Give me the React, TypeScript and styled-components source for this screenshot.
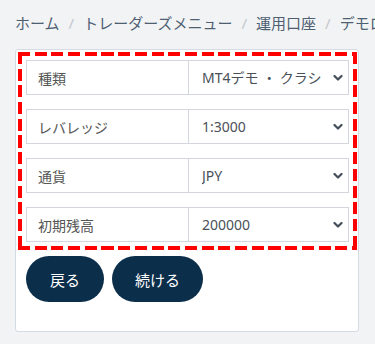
import styled, { createGlobalStyle } from 'styled-components'

const GlobalStyle = createGlobalStyle`
  html, body {
    margin: 0;
    padding: 0;
    background: #f2f3f5;
    font-family: "Noto Sans", "Noto Sans CJK JP", sans-serif;
  }
`

const crumbs = ['ホーム', 'トレーダーズメニュー', '運用口座', 'デモロ座の開設']

const fields = [
  { label: '種類', value: 'MT4デモ ・ クラシック口座' },
  { label: 'レバレッジ', value: '1:3000' },
  { label: '通貨', value: 'JPY' },
  { label: '初期残高', value: '200000' },
]

const Chevron = () => (
  <svg width='10' height='7' viewBox='0 0 10 7'>
    <path d='M1.5 1.5 L5 5 L8.5 1.5' fill='none' stroke='#444e5a' strokeWidth='2.2' strokeLinecap='round' strokeLinejoin='round' />
  </svg>
)

const App = () => {
  return (
    <Page>
      <GlobalStyle />
      <Breadcrumb>
        {crumbs.map((c, i) => (
          <Crumb key={i} first={i === 0}>{c}</Crumb>
        ))}
      </Breadcrumb>

      <Card>
        <Form>
          {fields.map((f) => (
            <Row key={f.label}>
              <Label>{f.label}</Label>
              <SelectCell>
                <Select defaultValue={f.value}>
                  <option value={f.value}>{f.value}</option>
                </Select>
                <Arrow><Chevron /></Arrow>
              </SelectCell>
            </Row>
          ))}
        </Form>

        <Buttons>
          <Button wide={false}>戻る</Button>
          <Button wide={true}>続ける</Button>
        </Buttons>
      </Card>
    </Page>
  )
}

const Page = styled.div`
  width: 375px;
  height: 344px;
  overflow: hidden;
  padding: 0 0 0 15px;
  box-sizing: border-box;
`

const Breadcrumb = styled.div`
  display: flex;
  white-space: nowrap;
  height: 49px;
  padding-bottom: 5px;
  box-sizing: border-box;
  align-items: center;
  font-size: 15px;
  color: #4f5f72;
`

const Crumb = styled.span<{ first: boolean }>`
  ${(p) => !p.first && `
    &::before {
      content: '/';
      color: #c3c7cc;
      padding: 0 9px 0 9px;
    }
  `}
`

const Card = styled.div`
  width: 344px;
  height: 283px;
  box-sizing: border-box;
  background: #fff;
  border: 1px solid #d5dbe2;
  border-radius: 3px;
  padding: 2px 1px 0 2px;
`

// red dashed frame, 12px dashes with ~4.7px gaps
const dashH = 'repeating-linear-gradient(90deg, #ff0000 0 12px, transparent 12px 16.7px)'
const dashV = 'repeating-linear-gradient(180deg, #ff0000 0 12px, transparent 12px 16.7px)'

const Form = styled.div`
  padding: 8px;
  display: flex;
  flex-direction: column;
  gap: 14px;
  background-image: ${dashH}, ${dashH}, ${dashV}, ${dashV};
  background-size: 100% 4px, 100% 4px, 4px 100%, 4px 100%;
  background-position: left top, left bottom, left top, right top;
  background-repeat: no-repeat;
`

const Row = styled.div`
  display: flex;
  height: 35px;
`

const Label = styled.div`
  width: 162px;
  box-sizing: border-box;
  border: 1px solid #d3d6dc;
  border-right: none;
  padding-left: 11px;
  display: flex;
  align-items: center;
  font-size: 14px;
  color: #555;
`

const SelectCell = styled.div`
  position: relative;
  flex: 1;
  min-width: 0;
  border: 1px solid #d3d6dc;
`

const Select = styled.select`
  appearance: none;
  width: 100%;
  height: 100%;
  border: none;
  background: transparent;
  padding: 0 25px 0 13px;
  font-family: "Noto Sans", "Noto Sans CJK JP", sans-serif;
  font-size: 14px;
  color: #4a5058;
  outline: none;
`

const Arrow = styled.span`
  position: absolute;
  right: 5px;
  top: 50%;
  transform: translateY(-50%);
  display: flex;
  pointer-events: none;
`

const Buttons = styled.div`
  display: flex;
  gap: 8px;
  padding: 6px 0 0 8px;
`

const Button = styled.button<{ wide: boolean }>`
  width: ${(p) => (p.wide ? '91px' : '78px')};
  height: 46px;
  border: none;
  border-radius: 23px;
  background: #0b2e4b;
  color: #fff;
  font-family: "Noto Sans", "Noto Sans CJK JP", sans-serif;
  font-size: 15px;
  cursor: pointer;
`

export default App
